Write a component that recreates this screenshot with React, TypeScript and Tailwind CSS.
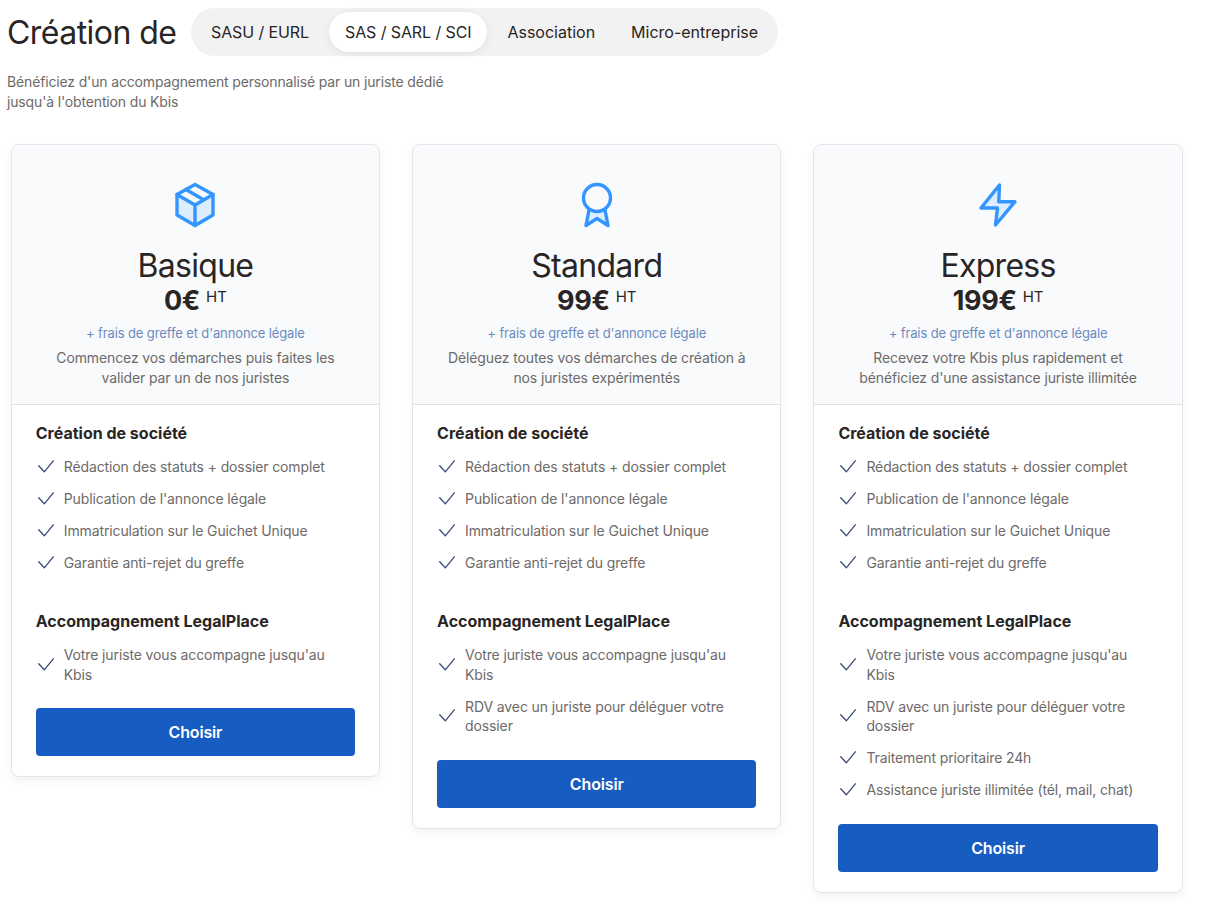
const tabs = [
  { label: "SASU / EURL", tight: true },
  { label: "SAS / SARL / SCI", tight: true },
  { label: "Association", tight: false },
  { label: "Micro-entreprise", tight: false },
];

const baseFeatures = [
  "Rédaction des statuts + dossier complet",
  "Publication de l'annonce légale",
  "Immatriculation sur le Guichet Unique",
  "Garantie anti-rejet du greffe",
];

const juriste = "Votre juriste vous accompagne jusqu'au Kbis";
const rdv = "RDV avec un juriste pour déléguer votre dossier";

function BoxIcon() {
  return (
    <svg viewBox="0 0 48 48" className="w-12 h-12" fill="none" stroke="#3395ff" strokeWidth="3.4" strokeLinejoin="round" strokeLinecap="round">
      <path d="M24 24 L42 13.5 V34 L24 44.5 Z" fill="#dcedfd" stroke="none" />
      <path d="M24 24 L6 13.5 V34 L24 44.5 Z" fill="#dcedfd" stroke="none" />
      <path d="M24 3.5 L42 13.5 V34 L24 44.5 L6 34 V13.5 Z" />
      <path d="M6 13.5 L24 24 L42 13.5 M24 24 V44.5 M15 8.5 L33 19" />
    </svg>
  );
}

function AwardIcon() {
  return (
    <svg viewBox="0 0 48 48" className="w-12 h-12" fill="none" stroke="#3395ff" strokeWidth="3.4" strokeLinejoin="round" strokeLinecap="round">
      <path d="M16 29 L13 44.5 L24 37.5 L35 44.5 L32 29 Z" fill="#dcedfd" stroke="none" />
      <circle cx="24" cy="17" r="13.5" fill="#f8fafc" />
      <path d="M16 29 L13 44.5 L24 37.5 L35 44.5 L32 29" />
    </svg>
  );
}

function BoltIcon() {
  return (
    <svg viewBox="0 0 48 48" className="w-12 h-12" fill="#dcedfd" stroke="#3395ff" strokeWidth="3.4" strokeLinejoin="round" strokeLinecap="round">
      <path d="M25.5 4 L7 27 H23.5 L21.5 44 L41 20.7 H24.8 Z" />
    </svg>
  );
}

function Check() {
  return (
    <svg viewBox="0 0 18 18" className="w-[18px] h-[18px] shrink-0" fill="none" stroke="#3b4a7a" strokeWidth="1.3" strokeLinecap="round" strokeLinejoin="round">
      <path d="M2.7 7.8 L8.3 13.8 L17.3 2.8" />
    </svg>
  );
}

function Feature({ text }: { text: string }) {
  return (
    <li className="flex items-center gap-[10px] py-[6.2px] pr-4 text-[14px] leading-[19.6px] tracking-[-0.12px]">
      <Check />
      <span>{text}</span>
    </li>
  );
}

function Card({
  icon,
  name,
  price,
  desc,
  support,
}: {
  icon: React.ReactNode;
  name: string;
  price: string;
  desc: string[];
  support: string[];
}) {
  return (
    <div className="flex-1 rounded-lg border border-[#e3e5e8] bg-white shadow-[0_4px_10px_rgba(0,0,0,0.05)] overflow-hidden">
      <div className="h-[260px] flex flex-col items-center bg-[#f8fafc] border-b border-[#dfe2e6] pt-[36px] text-center">
        {icon}
        <h3 className="mt-[17px] text-[32px] leading-[40px] text-[#292524] tracking-[-0.7px]">{name}</h3>
        <div className="-mt-px flex items-start justify-center h-[32px] text-[#292524]">
          <span className="text-[27px] leading-[32px] font-bold tracking-[-0.3px]">{price}</span>
          <span className="ml-[6px] text-[15px] leading-[18px] mt-[3px]">HT</span>
        </div>
        <p className="mt-[7px] text-[13px] leading-[18px] tracking-[-0.12px] text-[#6b8bbf]">+ frais de greffe et d'annonce légale</p>
        <div className="mt-[6px] text-[14px] leading-[20px] tracking-[-0.12px] text-[#6d6a69]">
          {desc.map((line) => (
            <div key={line}>{line}</div>
          ))}
        </div>
      </div>
      <div className="px-6 pt-[18px] pb-5 text-[#6d6a69]">
        <h4 className="text-[16px] leading-[20px] font-bold text-[#292524]">Création de société</h4>
        <ul className="mt-[8px]">
          {baseFeatures.map((f) => (
            <Feature key={f} text={f} />
          ))}
        </ul>
        <h4 className="mt-[32px] text-[16px] leading-[20px] font-bold text-[#292524]">Accompagnement LegalPlace</h4>
        <ul className="mt-[8px]">
          {support.map((f) => (
            <Feature key={f} text={f} />
          ))}
        </ul>
        <button className="mt-[18px] w-full h-12 rounded bg-[#175cc0] text-white text-[16px] font-semibold tracking-[-0.15px]">Choisir</button>
      </div>
    </div>
  );
}

export default function App() {
  return (
    <div className="min-h-[911px] bg-white font-[Inter,sans-serif] text-[#292524]">
      <div className="pl-[7px] pt-2 flex items-center">
        <h2 className="mt-px -mb-px text-[32px] leading-[48px] tracking-[-0.55px] w-[184px]">Création de</h2>
        <div className="flex items-center gap-1 h-12 rounded-full bg-[#f2f2f2] px-1">
          {tabs.map((t, i) => (
            <div
              key={t.label}
              className={
                (i === 1 ? "bg-white shadow-[0_2px_8px_rgba(0,0,0,0.08)] " : "") +
                (t.tight ? "tracking-[-0.1px] " : "") +
                "h-10 px-4 flex items-center rounded-full text-[16px]"
              }
            >
              {t.label}
            </div>
          ))}
        </div>
      </div>
      <p className="ml-[7px] mt-[16px] w-[460px] text-[14px] leading-[20px] tracking-[-0.15px] text-[#6d6a69]">
        Bénéficiez d'un accompagnement personnalisé par un juriste dédié
        <br />
        jusqu'à l'obtention du Kbis
      </p>
      <div className="mt-[32px] ml-[10.75px] w-[1172px] flex items-start gap-8">
        <Card icon={<BoxIcon />} name="Basique" price="0€" desc={["Commencez vos démarches puis faites les", "valider par un de nos juristes"]} support={[juriste]} />
        <Card icon={<AwardIcon />} name="Standard" price="99€" desc={["Déléguez toutes vos démarches de création à", "nos juristes expérimentés"]} support={[juriste, rdv]} />
        <Card
          icon={<BoltIcon />}
          name="Express"
          price="199€"
          desc={["Recevez votre Kbis plus rapidement et", "bénéficiez d'une assistance juriste illimitée"]}
          support={[juriste, rdv, "Traitement prioritaire 24h", "Assistance juriste illimitée (tél, mail, chat)"]}
        />
      </div>
    </div>
  );
}
